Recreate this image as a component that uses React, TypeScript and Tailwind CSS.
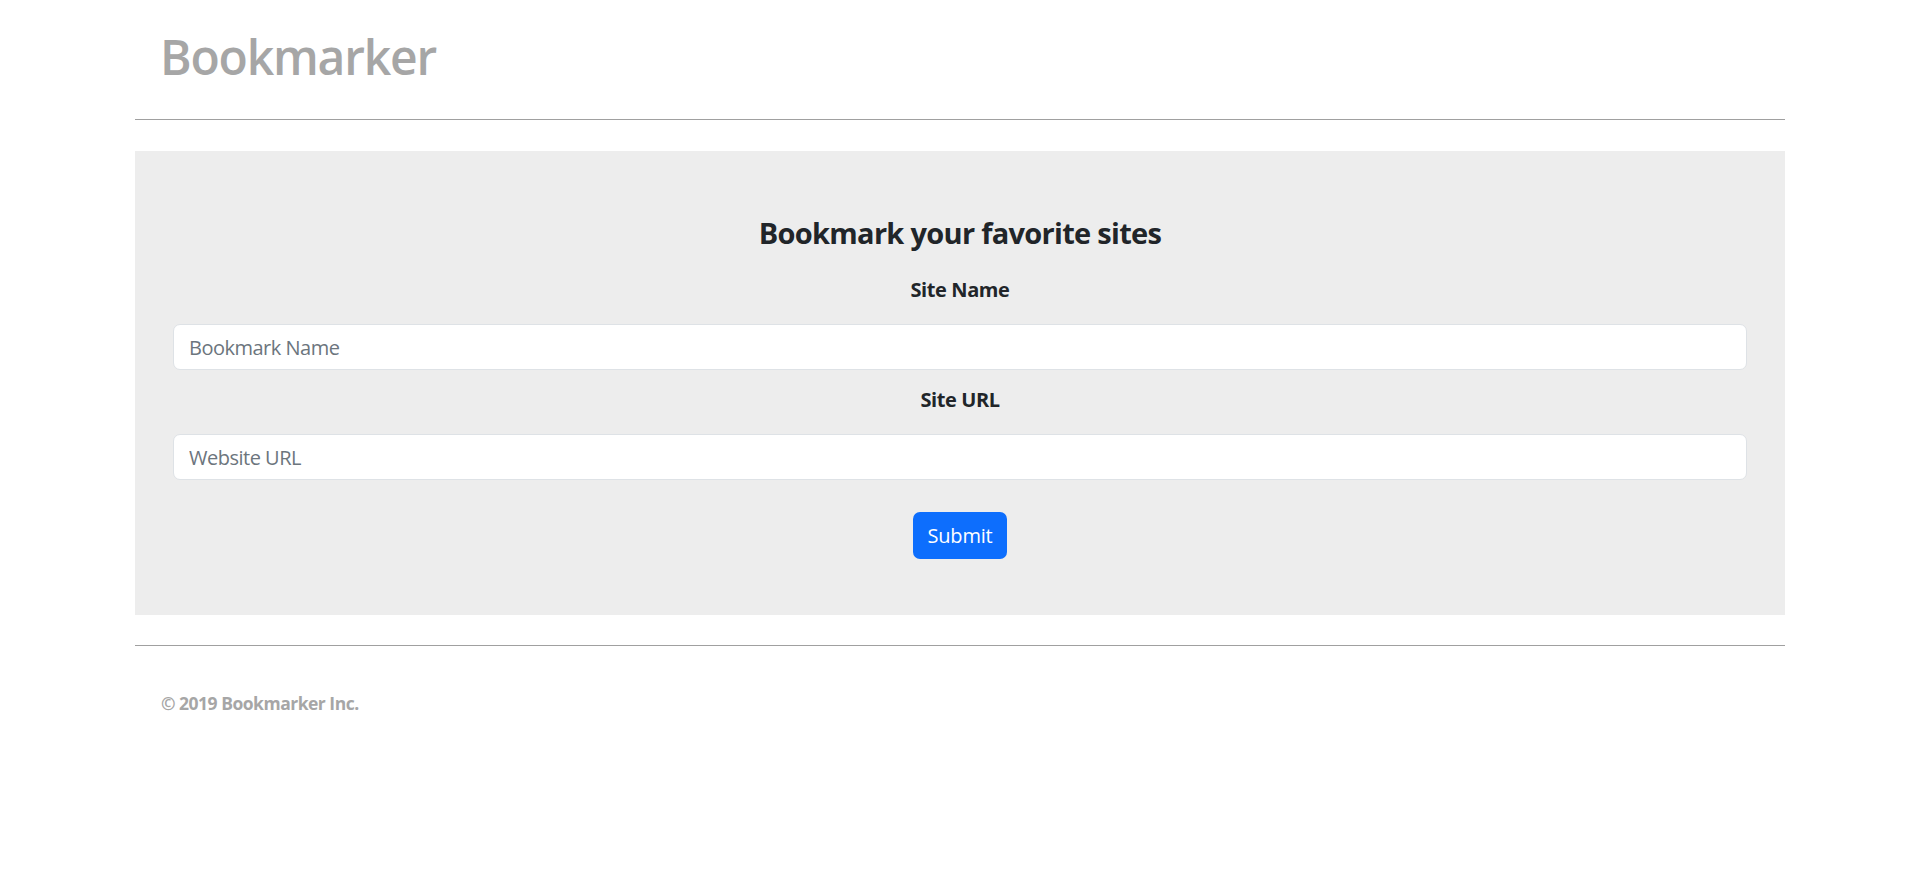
import React from "react";

export default function App() {
  return (
    <div className="min-h-[878px] bg-white font-['Open_Sans','Noto_Sans',sans-serif]">
      <div className="mx-auto w-[1650px]">
        <header className="h-[120px] border-b border-[#a0a0a0] pl-[25px] pt-[27px]">
          <h1 className="text-[48px] font-semibold leading-[60px] tracking-[-1.2px] text-[#a6a6a6]">Bookmarker</h1>
        </header>

        <section className="mt-[31px] bg-[#ededed] px-[38px] pt-[64px] pb-[56px]">
          <h2 className="text-center text-[29px] font-bold leading-[36px] tracking-[-0.7px] text-[#212529]">
            Bookmark your favorite sites
          </h2>
          <form className="mt-[24px] flex flex-col" onSubmit={(e) => e.preventDefault()}>
            <label className="text-center text-[20px] font-bold leading-[30px] tracking-[-0.4px] text-[#212529]">Site Name</label>
            <input
              type="text"
              placeholder="Bookmark Name"
              className="mt-[19px] h-[46px] w-full rounded-[7px] border border-[#dee2e6] bg-white px-[15px] text-[20px] tracking-[-0.5px] text-[#212529] outline-none placeholder:text-[#6c757d]"
            />
            <label className="mt-[15px] text-center text-[20px] font-bold leading-[30px] tracking-[-0.4px] text-[#212529]">Site URL</label>
            <input
              type="text"
              placeholder="Website URL"
              className="mt-[19px] h-[46px] w-full rounded-[7px] border border-[#dee2e6] bg-white px-[15px] text-[20px] tracking-[-0.5px] text-[#212529] outline-none placeholder:text-[#6c757d]"
            />
            <div className="mt-[32px] flex justify-center">
              <button
                type="submit"
                className="h-[47px] w-[94px] rounded-[7px] bg-[#0d6efd] text-[20px] tracking-[-0.2px] text-white"
              >
                Submit
              </button>
            </div>
          </form>
        </section>

        <footer className="mt-[30px] border-t border-[#a0a0a0] pl-[26px] pt-[44px]">
          <p className="text-[17.5px] font-bold leading-[26px] tracking-[-0.5px] text-[#a6a6a6]">© 2019 Bookmarker Inc.</p>
        </footer>
      </div>
    </div>
  );
}
